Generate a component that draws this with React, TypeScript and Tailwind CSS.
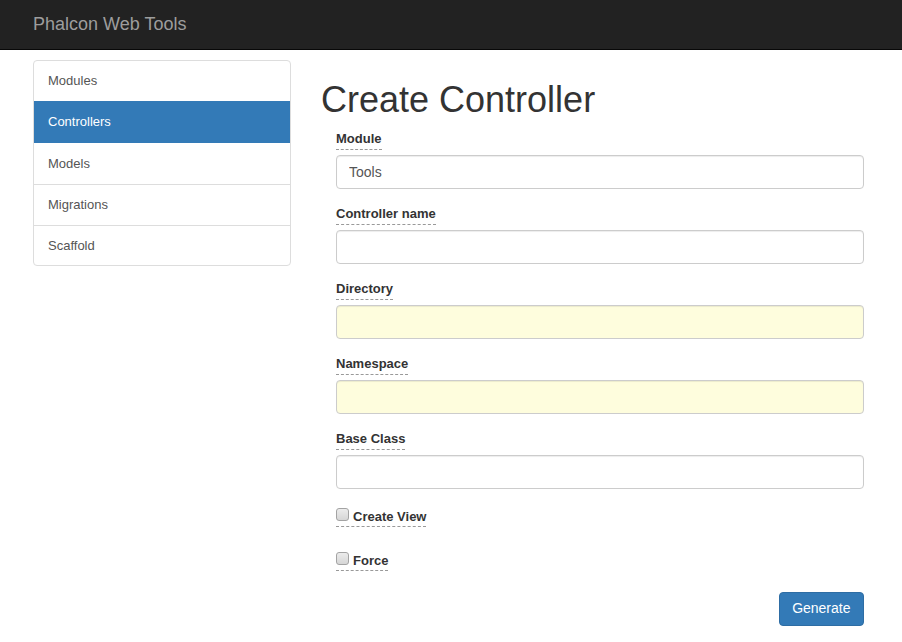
import React from "react";

const NAV: { name: string; cls: string }[] = [
  { name: "Modules", cls: "h-[40px] text-[#555]" },
  { name: "Controllers", cls: "h-[42px] bg-[#337ab7] text-white" },
  { name: "Models", cls: "h-[41px] text-[#555]" },
  { name: "Migrations", cls: "h-[41px] border-t border-[#ddd] text-[#555]" },
  { name: "Scaffold", cls: "h-[40px] border-t border-[#ddd] text-[#555]" },
];

const FIELDS: { label: string; value?: string; yellow?: boolean }[] = [
  { label: "Module", value: "Tools" },
  { label: "Controller name" },
  { label: "Directory", yellow: true },
  { label: "Namespace", yellow: true },
  { label: "Base Class" },
];

function Checkbox({ label }: { label: string }) {
  return (
    <label className="flex w-fit items-start h-[21px] border-b border-dashed border-[#999] font-bold text-[13px] leading-[20px] text-[#333]">
      <span className="mt-[2px] mr-[4px] w-[13px] h-[13px] rounded-[3px] border border-[#a3a3a3] bg-gradient-to-b from-[#ececec] to-[#d6d6d6]" />
      <span className="pt-[1px]">{label}</span>
    </label>
  );
}

export default function App() {
  return (
    <div className="min-h-screen bg-white text-[#333]" style={{ fontFamily: '"Liberation Sans", Arial, sans-serif' }}>
      {/* Navbar */}
      <nav className="h-[50px] bg-[#222] border-b border-[#080808] flex items-center px-[33px]">
        <span className="text-[18px] text-[#9d9d9d]">Phalcon Web Tools</span>
      </nav>

      <div className="flex pl-[33px] pt-[10px]">
        {/* Sidebar */}
        <div className="w-[258px] shrink-0">
          <div className="border border-[#ddd] rounded-[4px] overflow-hidden">
            {NAV.map((n) => (
              <div key={n.name} className={n.cls + " px-[14px] flex items-center text-[13px]"}>
                {n.name}
              </div>
            ))}
          </div>
        </div>

        {/* Content */}
        <div className="ml-[30px] w-[558px]">
          <h1 className="mt-[20px] mb-[9px] text-[36px] leading-[39.6px] text-[#333] font-medium">Create Controller</h1>
          <form className="px-[15px]" onSubmit={(e) => e.preventDefault()}>
            {FIELDS.map((f) => (
              <div key={f.label} className="mb-[15px]">
                <label className="block w-fit h-[21px] mb-[5px] border-b border-dashed border-[#999] font-bold text-[13px] leading-[20px] text-[#333]">
                  {f.label}
                </label>
                <input
                  defaultValue={f.value}
                  className={
                    "block w-full h-[34px] px-[12px] rounded-[4px] border border-[#ccc] text-[14px] text-[#555] outline-none shadow-[inset_0_1px_1px_rgba(0,0,0,0.075)] " +
                    (f.yellow ? "bg-[#fefddd]" : "bg-white")
                  }
                />
              </div>
            ))}
            <div className="pt-[2px]">
              <Checkbox label="Create View" />
            </div>
            <div className="mt-[23px]">
              <Checkbox label="Force" />
            </div>
            <div className="flex justify-end mt-[21px]">
              <button className="h-[34px] px-[12.5px] rounded-[4px] bg-[#337ab7] border border-[#2e6da4] text-white text-[14px]">
                Generate
              </button>
            </div>
          </form>
        </div>
      </div>
    </div>
  );
}
